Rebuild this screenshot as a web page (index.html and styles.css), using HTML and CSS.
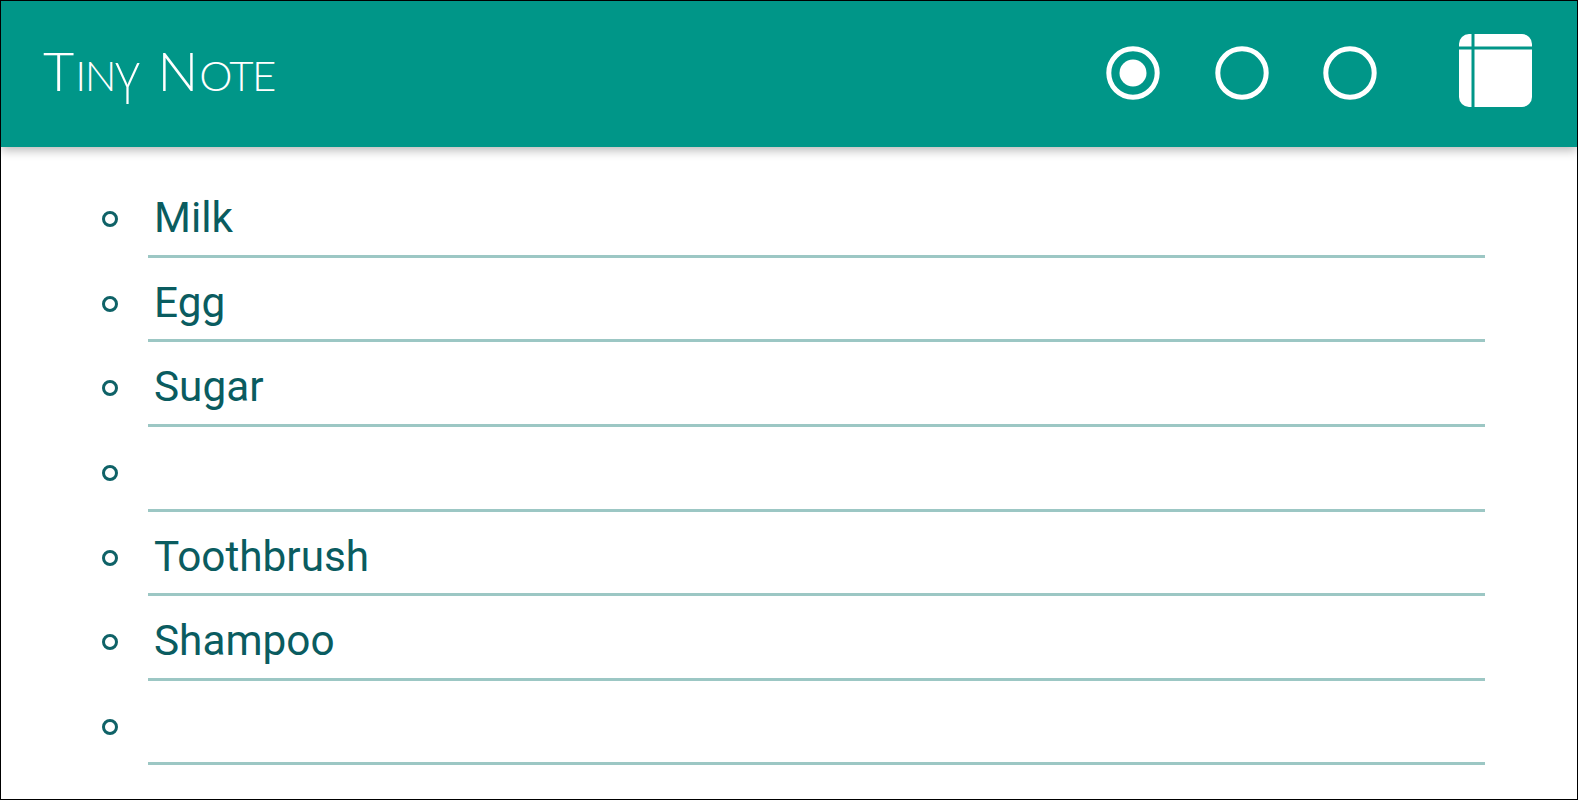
FILE: index.html
```html
<!DOCTYPE html>
<html lang="en">
<head>
<meta charset="utf-8">
<title>Tiny Note</title>
<link rel="stylesheet" href="styles.css">
</head>
<body>
<div class="page">
  <header class="bar">
    <h1 class="logo"><span class="word">T<span class="small">in<span class="tail">y</span></span></span><span class="word">N<span class="small">ote</span></span></h1>
    <div class="radios">
      <svg class="radio" viewBox="0 0 54 54"><circle cx="27" cy="27" r="24.2" fill="none" stroke="#fff" stroke-width="5"/><circle cx="27" cy="27" r="13.5" fill="#fff"/></svg>
      <svg class="radio" viewBox="0 0 54 54"><circle cx="27" cy="27" r="24.2" fill="none" stroke="#fff" stroke-width="5"/></svg>
      <svg class="radio" viewBox="0 0 54 54"><circle cx="27" cy="27" r="24.2" fill="none" stroke="#fff" stroke-width="5"/></svg>
    </div>
    <svg class="layout" viewBox="0 0 73 73"><rect width="73" height="73" rx="10" fill="#fff"/><path d="M14 0V73M0 14H73" stroke="#009688" stroke-width="3"/></svg>
  </header>
  <ul class="list">
    <li class="item"><span class="text">Milk</span></li>
    <li class="item"><span class="text">Egg</span></li>
    <li class="item"><span class="text">Sugar</span></li>
    <li class="item"><span class="text"></span></li>
    <li class="item"><span class="text">Toothbrush</span></li>
    <li class="item"><span class="text">Shampoo</span></li>
    <li class="item"><span class="text"></span></li>
  </ul>
</div>
</body>
</html>
```
FILE: styles.css
```css
*, *::before { box-sizing: border-box; }
html, body { margin: 0; padding: 0; background: #fff; }
.page {
  width: 1578px;
  height: 800px;
  border: 1px solid #000;
  overflow: hidden;
  font-family: Roboto, "Liberation Sans", sans-serif;
}
.bar {
  height: 146px;
  background: #009688;
  box-shadow: 0 3px 10px rgba(0, 0, 0, .3);
  display: flex;
  align-items: center;
  padding: 0 45px 0 42px;
  position: relative;
}
.logo {
  margin: 0 auto 0 0;
  display: flex;
  gap: 19px;
  font: 300 54px/1 Lato, sans-serif;
  color: #fff;
  text-transform: uppercase;
  padding-bottom: 6px;
}
.small { font-size: 42px; letter-spacing: -1.5px; margin-left: 1px; }
.tail { display: inline-block; transform: scaleY(1.35); transform-origin: top; }
.radios { display: flex; gap: 54.4px; margin: 0 82px 2px 0; }
.radio { width: 54px; height: 54px; display: block; }
.layout { width: 73px; height: 73px; display: block; margin-bottom: 8px; }
.list {
  list-style: none;
  margin: 0;
  padding: 26.3px 0 0 147px;
}
.item {
  width: 1337px;
  height: 84.6px;
  border-bottom: 3px solid #9cc7c4;
  position: relative;
  padding-left: 6px;
}
.item::before {
  content: "";
  position: absolute;
  left: -46px;
  top: 38px;
  width: 16px;
  height: 16px;
  border: 3px solid #0f6267;
  border-radius: 50%;
}
.text {
  display: block;
  font-size: 42.3px;
  line-height: 56px;
  color: #0a5c60;
  padding-top: 17px;
}
```
